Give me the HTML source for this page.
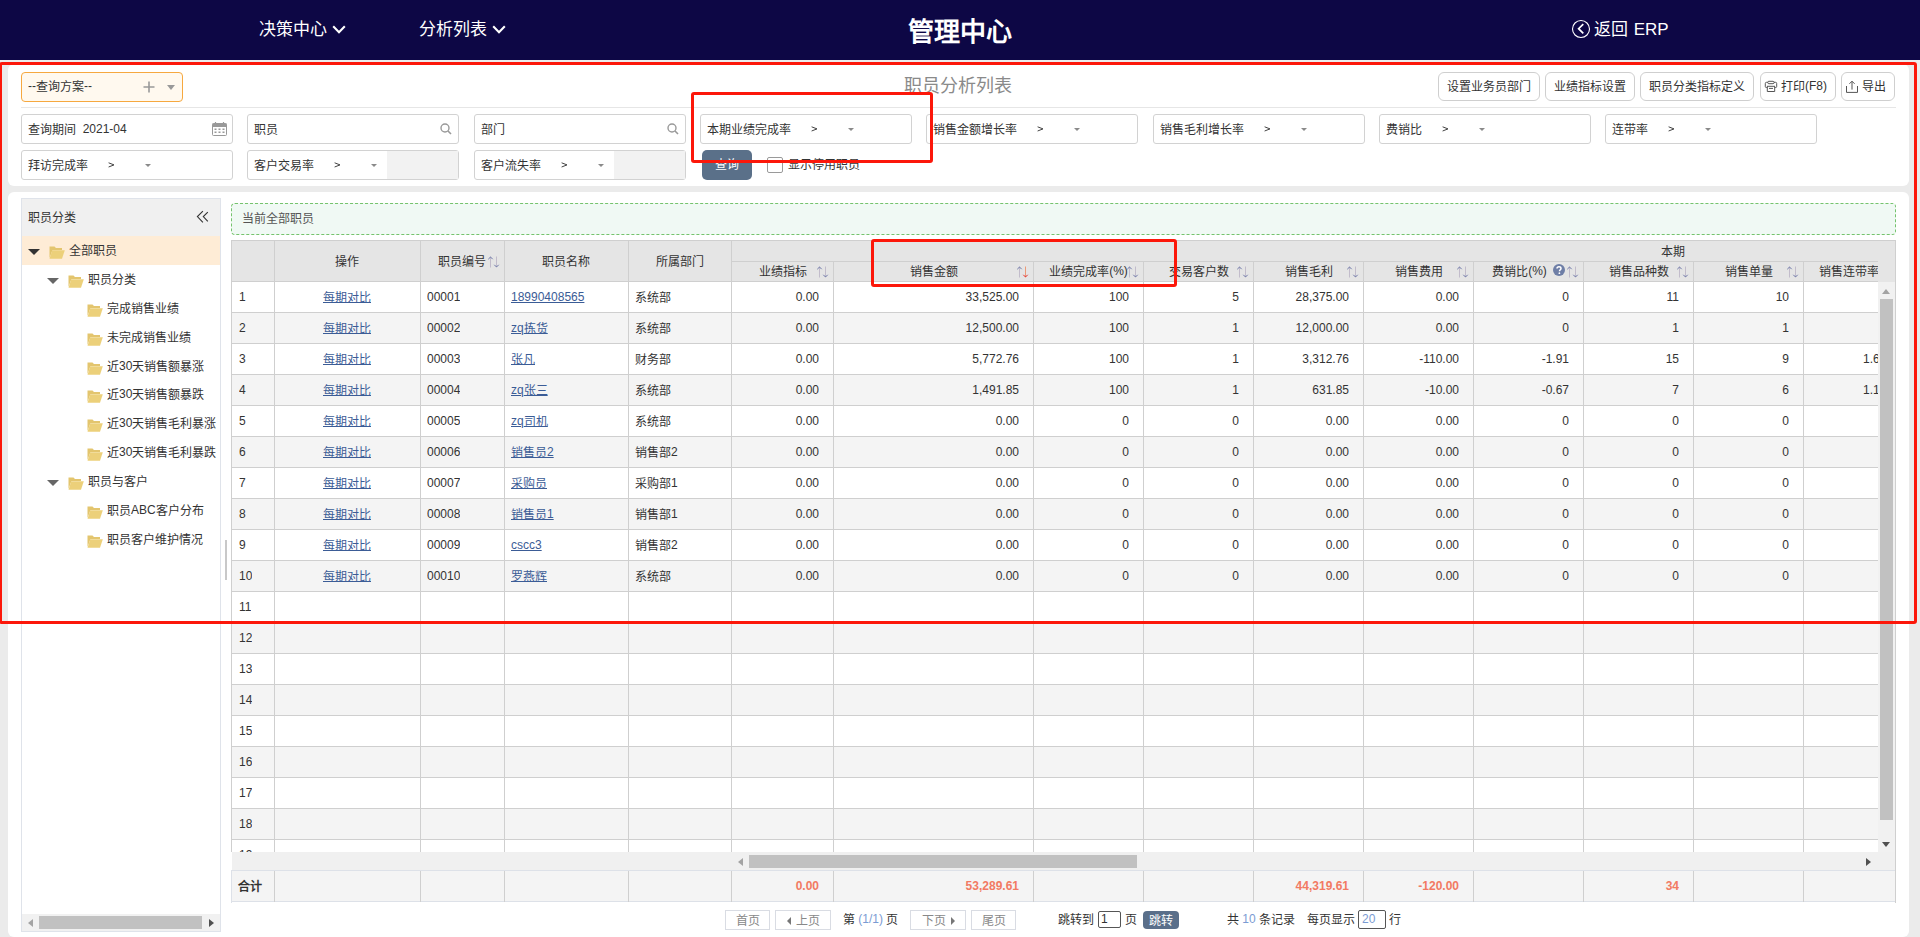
<!DOCTYPE html><html lang="zh-CN"><head><meta charset="utf-8"><title>职员分析列表</title><style>

*{box-sizing:border-box;margin:0;padding:0}
html,body{width:1920px;height:937px;overflow:hidden}
body{position:relative;background:#ebebeb;font-family:"Liberation Sans",sans-serif;font-size:12px;color:#333}
.abs{position:absolute}
.hdr{position:absolute;left:0;top:0;width:1920px;height:60px;background:#0d0745;color:#fff}
.nav{position:absolute;top:17px;font-size:17px;line-height:24px;white-space:nowrap}
.panel{position:absolute;background:#fff;border-radius:6px}
.inp{position:absolute;height:30px;border:1px solid #d2d2d2;border-radius:3px;background:#fff;width:212px}
.inp .t{position:absolute;left:6px;top:7px;line-height:14px;white-space:nowrap}
.gt{position:absolute;font-size:11px;color:#555}
.tri{position:absolute;width:0;height:0;border-left:4px solid transparent;border-right:4px solid transparent;border-top:4px solid #888}
.btn{position:absolute;top:72px;height:29px;border:1px solid #cfcfcf;border-radius:6px;background:#fff;line-height:27px;text-align:center;white-space:nowrap;color:#333}
.c{position:absolute;white-space:nowrap;overflow:hidden}
.hd{background:#e5e5e5}
.lnk{color:#3b5c96;text-decoration:underline}
.red{position:absolute;border:3px solid #fc170a;border-radius:3px}
.sort{position:absolute;width:12px;height:12px}
.z{position:relative;top:1px}

</style></head><body>
<div class="hdr">
<div class="nav" style="left:259px"><span class="z">决策中心</span></div>
<svg width="14" height="9" viewBox="0 0 14 9" style="position:absolute;left:332px;top:25px"><path d="M1.2 1.3 L7 7.2 L12.8 1.3" stroke="#fff" stroke-width="2.1" fill="none"/></svg>
<div class="nav" style="left:419px"><span class="z">分析列表</span></div>
<svg width="14" height="9" viewBox="0 0 14 9" style="position:absolute;left:492px;top:25px"><path d="M1.2 1.3 L7 7.2 L12.8 1.3" stroke="#fff" stroke-width="2.1" fill="none"/></svg>
<div class="abs" style="left:0;width:1920px;top:15px;text-align:center;font-size:26px;line-height:32px;font-weight:bold"><span class="z">管理中心</span></div>
<svg class="abs" style="left:1571px;top:19px" width="20" height="20" viewBox="0 0 20 20"><circle cx="10" cy="10" r="8.5" stroke="#fff" stroke-width="1.1" fill="none"/><path d="M12.3 5.2L7.6 9.7L12.3 14.3" stroke="#fff" stroke-width="1.7" fill="none"/></svg>
<div class="nav" style="left:1594px;font-size:17px"><span class="z">返回</span> <span style="position:relative;top:1px;left:1px">ERP</span></div>
</div>
<div class="panel" style="left:8px;top:64px;width:1901px;height:122px"></div>
<div class="abs" style="left:21px;top:72px;width:162px;height:30px;border:1px solid #f6a83f;border-radius:4px;background:#fff9ef"></div>
<div class="abs" style="left:28px;top:79px;line-height:14px">--<span class="z">查询方案</span>--</div>
<svg class="abs" style="left:143px;top:81px" width="12" height="12" viewBox="0 0 12 12"><path d="M6 0.5V11.5M0.5 6H11.5" stroke="#999" stroke-width="1.6"/></svg>
<div class="tri" style="left:167px;top:85px;border-left-width:4.5px;border-right-width:4.5px;border-top-width:5px;border-top-color:#999"></div>
<div class="abs" style="left:0;width:1920px;top:74px;left:-2px;text-align:center;font-size:18px;line-height:22px;color:#8a8a8a"><span class="z">职员分析列表</span></div>
<div class="btn" style="left:1438px;width:102px"><span class="z">设置业务员部门</span></div>
<div class="btn" style="left:1545px;width:90px"><span class="z">业绩指标设置</span></div>
<div class="btn" style="left:1640px;width:114px"><span class="z">职员分类指标定义</span></div>
<div class="btn" style="left:1760px;width:76px"></div>
<div class="btn" style="left:1841px;width:54px"></div>
<div class="abs" style="left:1781px;top:79px;line-height:14px;white-space:nowrap"><span class="z">打印</span>(F8)</div>
<div class="abs" style="left:1862px;top:79px;line-height:14px;white-space:nowrap"><span class="z">导出</span></div>
<svg class="abs" style="left:1764px;top:80px" width="14" height="13" viewBox="0 0 14 13"><rect x="3.8" y="1.3" width="6.2" height="2.4" rx="1" stroke="#555" stroke-width="1" fill="none"/><path d="M3.3 7.5H2.3Q1.3 7.5 1.3 6.5V3.5Q1.3 2.3 2.5 2.3H3.8M10 2.3H11.5Q12.7 2.3 12.7 3.5V6.5Q12.7 7.5 11.7 7.5H10.7" stroke="#555" stroke-width="1" fill="none"/><path d="M3 6.3H11" stroke="#555" stroke-width="1"/><path d="M3.3 6.3V11.5H10.7V6.3" stroke="#555" stroke-width="1" fill="none"/><path d="M5 8.4H9" stroke="#555" stroke-width="1"/></svg>
<svg class="abs" style="left:1845px;top:80px" width="14" height="14" viewBox="0 0 14 14"><path d="M1.5 6V12.4H12.5V6" stroke="#555" stroke-width="1" fill="none"/><path d="M7 9.6V1.4M4.4 3.8L7 1.2L9.6 3.8" stroke="#555" stroke-width="1" fill="none"/></svg>
<div class="abs" style="left:21px;top:107px;width:1875px;height:1px;background:#e6e6e6"></div>
<div class="inp" style="left:21px;top:114px"><div class="t"><span class="z">查询期间</span>&nbsp; 2021-04</div><svg class="abs" style="right:5px;top:7px" width="15" height="14" viewBox="0 0 15 14"><rect x="0.5" y="1.5" width="14" height="12" rx="1" stroke="#999" fill="#fff"/><rect x="0.5" y="1.5" width="14" height="3.5" fill="#999"/><path d="M3.5 0V3M11.5 0V3" stroke="#999" stroke-width="1.2"/><g fill="#999"><rect x="2.5" y="6.5" width="2" height="1.5"/><rect x="6.5" y="6.5" width="2" height="1.5"/><rect x="10.5" y="6.5" width="2" height="1.5"/><rect x="2.5" y="9.5" width="2" height="1.5"/><rect x="6.5" y="9.5" width="2" height="1.5"/><rect x="10.5" y="9.5" width="2" height="1.5"/></g></svg></div>
<div class="inp" style="left:247px;top:114px"><div class="t"><span class="z">职员</span></div><svg class="abs" style="right:6px;top:8px" width="12" height="12" viewBox="0 0 12 12"><circle cx="5" cy="5" r="4" stroke="#999" stroke-width="1.4" fill="none"/><path d="M8 8L11 11" stroke="#999" stroke-width="1.6"/></svg></div>
<div class="inp" style="left:474px;top:114px"><div class="t"><span class="z">部门</span></div><svg class="abs" style="right:6px;top:8px" width="12" height="12" viewBox="0 0 12 12"><circle cx="5" cy="5" r="4" stroke="#999" stroke-width="1.4" fill="none"/><path d="M8 8L11 11" stroke="#999" stroke-width="1.6"/></svg></div>
<div class="inp" style="left:700px;top:114px"><div class="t"><span class="z">本期业绩完成率</span></div><svg class="abs" style="left:110px;top:11px" width="7" height="6" viewBox="0 0 7 6"><path d="M0.6 0.8L6 2.9L0.6 5" stroke="#444" stroke-width="1" fill="none"/></svg><div class="tri" style="left:147px;top:13px;border-left-width:3px;border-right-width:3px;border-top-width:3.5px;border-top-color:#8a8a8a"></div></div>
<div class="inp" style="left:926px;top:114px"><div class="t"><span class="z">销售金额增长率</span></div><svg class="abs" style="left:110px;top:11px" width="7" height="6" viewBox="0 0 7 6"><path d="M0.6 0.8L6 2.9L0.6 5" stroke="#444" stroke-width="1" fill="none"/></svg><div class="tri" style="left:147px;top:13px;border-left-width:3px;border-right-width:3px;border-top-width:3.5px;border-top-color:#8a8a8a"></div></div>
<div class="inp" style="left:1153px;top:114px"><div class="t"><span class="z">销售毛利增长率</span></div><svg class="abs" style="left:110px;top:11px" width="7" height="6" viewBox="0 0 7 6"><path d="M0.6 0.8L6 2.9L0.6 5" stroke="#444" stroke-width="1" fill="none"/></svg><div class="tri" style="left:147px;top:13px;border-left-width:3px;border-right-width:3px;border-top-width:3.5px;border-top-color:#8a8a8a"></div></div>
<div class="inp" style="left:1379px;top:114px"><div class="t"><span class="z">费销比</span></div><svg class="abs" style="left:62px;top:11px" width="7" height="6" viewBox="0 0 7 6"><path d="M0.6 0.8L6 2.9L0.6 5" stroke="#444" stroke-width="1" fill="none"/></svg><div class="tri" style="left:99px;top:13px;border-left-width:3px;border-right-width:3px;border-top-width:3.5px;border-top-color:#8a8a8a"></div></div>
<div class="inp" style="left:1605px;top:114px"><div class="t"><span class="z">连带率</span></div><svg class="abs" style="left:62px;top:11px" width="7" height="6" viewBox="0 0 7 6"><path d="M0.6 0.8L6 2.9L0.6 5" stroke="#444" stroke-width="1" fill="none"/></svg><div class="tri" style="left:99px;top:13px;border-left-width:3px;border-right-width:3px;border-top-width:3.5px;border-top-color:#8a8a8a"></div></div>
<div class="inp" style="left:21px;top:150px"><div class="t"><span class="z">拜访完成率</span></div><svg class="abs" style="left:86px;top:11px" width="7" height="6" viewBox="0 0 7 6"><path d="M0.6 0.8L6 2.9L0.6 5" stroke="#444" stroke-width="1" fill="none"/></svg><div class="tri" style="left:123px;top:13px;border-left-width:3px;border-right-width:3px;border-top-width:3.5px;border-top-color:#8a8a8a"></div></div>
<div class="inp" style="left:247px;top:150px"><div class="abs" style="left:139px;top:0;width:71px;height:28px;background:#f2f2f2"></div><div class="t"><span class="z">客户交易率</span></div><svg class="abs" style="left:86px;top:11px" width="7" height="6" viewBox="0 0 7 6"><path d="M0.6 0.8L6 2.9L0.6 5" stroke="#444" stroke-width="1" fill="none"/></svg><div class="tri" style="left:123px;top:13px;border-left-width:3px;border-right-width:3px;border-top-width:3.5px;border-top-color:#8a8a8a"></div></div>
<div class="inp" style="left:474px;top:150px"><div class="abs" style="left:139px;top:0;width:71px;height:28px;background:#f2f2f2"></div><div class="t"><span class="z">客户流失率</span></div><svg class="abs" style="left:86px;top:11px" width="7" height="6" viewBox="0 0 7 6"><path d="M0.6 0.8L6 2.9L0.6 5" stroke="#444" stroke-width="1" fill="none"/></svg><div class="tri" style="left:123px;top:13px;border-left-width:3px;border-right-width:3px;border-top-width:3.5px;border-top-color:#8a8a8a"></div></div>
<div class="abs" style="left:702px;top:150px;width:50px;height:30px;border-radius:5px;background:#5a7089;color:#fff;text-align:center;line-height:28px"><span class="z">查询</span></div>
<div class="abs" style="left:767px;top:157px;width:16px;height:16px;border:1px solid #9a9a9a;border-radius:2px;background:#fff"></div>
<div class="abs" style="left:788px;top:157px;line-height:14px"><span class="z">显示停用职员</span></div>
<div class="panel" style="left:8px;top:192px;width:1901px;height:745px"></div>
<div class="abs" style="left:21px;top:198px;width:200px;height:734px;border:1px solid #dfe3ea;background:#fff"></div>
<div class="abs" style="left:22px;top:199px;width:198px;height:37px;background:#f0f0f0"></div>
<div class="abs" style="left:28px;top:210px;line-height:14px"><span class="z">职员分类</span></div>
<svg class="abs" style="left:195px;top:209px" width="16" height="16" viewBox="0 0 16 16"><path d="M7.9 2.2L2.4 7.6L7.9 13.4M12.8 3.1L8.3 7.6L12.8 12.4" stroke="#333" stroke-width="1.1" fill="none"/></svg>
<div class="abs" style="left:22px;top:236px;width:198px;height:29px;background:#feecd6"></div>
<div class="tri" style="left:28px;top:249px;border-left-width:6px;border-right-width:6px;border-top-width:6px;border-top-color:#333"></div>
<svg class="abs" style="left:49px;top:245px" width="16" height="14" viewBox="0 0 16 14"><path d="M0.5 1.5H5.5L7 3H13V5H3.5L0.5 13Z" fill="#e3c56e"/><path d="M3.2 5.2H15.8L13 13.8H0.5Z" fill="#ecd07a"/></svg>
<div class="abs" style="left:69px;top:243px;line-height:14px;white-space:nowrap"><span class="z">全部职员</span></div>
<div class="tri" style="left:47px;top:278px;border-left-width:6px;border-right-width:6px;border-top-width:6px;border-top-color:#666"></div>
<svg class="abs" style="left:68px;top:274px" width="16" height="14" viewBox="0 0 16 14"><path d="M0.5 1.5H5.5L7 3H13V5H3.5L0.5 13Z" fill="#e3c56e"/><path d="M3.2 5.2H15.8L13 13.8H0.5Z" fill="#ecd07a"/></svg>
<div class="abs" style="left:88px;top:272px;line-height:14px;white-space:nowrap"><span class="z">职员分类</span></div>
<svg class="abs" style="left:87px;top:303px" width="16" height="14" viewBox="0 0 16 14"><path d="M0.5 1.5H5.5L7 3H13V5H3.5L0.5 13Z" fill="#e3c56e"/><path d="M3.2 5.2H15.8L13 13.8H0.5Z" fill="#ecd07a"/></svg>
<div class="abs" style="left:107px;top:301px;line-height:14px;white-space:nowrap"><span class="z">完成销售业绩</span></div>
<svg class="abs" style="left:87px;top:332px" width="16" height="14" viewBox="0 0 16 14"><path d="M0.5 1.5H5.5L7 3H13V5H3.5L0.5 13Z" fill="#e3c56e"/><path d="M3.2 5.2H15.8L13 13.8H0.5Z" fill="#ecd07a"/></svg>
<div class="abs" style="left:107px;top:330px;line-height:14px;white-space:nowrap"><span class="z">未完成销售业绩</span></div>
<svg class="abs" style="left:87px;top:361px" width="16" height="14" viewBox="0 0 16 14"><path d="M0.5 1.5H5.5L7 3H13V5H3.5L0.5 13Z" fill="#e3c56e"/><path d="M3.2 5.2H15.8L13 13.8H0.5Z" fill="#ecd07a"/></svg>
<div class="abs" style="left:107px;top:359px;line-height:14px;white-space:nowrap"><span class="z">近</span>30<span class="z">天销售额暴涨</span></div>
<svg class="abs" style="left:87px;top:389px" width="16" height="14" viewBox="0 0 16 14"><path d="M0.5 1.5H5.5L7 3H13V5H3.5L0.5 13Z" fill="#e3c56e"/><path d="M3.2 5.2H15.8L13 13.8H0.5Z" fill="#ecd07a"/></svg>
<div class="abs" style="left:107px;top:387px;line-height:14px;white-space:nowrap"><span class="z">近</span>30<span class="z">天销售额暴跌</span></div>
<svg class="abs" style="left:87px;top:418px" width="16" height="14" viewBox="0 0 16 14"><path d="M0.5 1.5H5.5L7 3H13V5H3.5L0.5 13Z" fill="#e3c56e"/><path d="M3.2 5.2H15.8L13 13.8H0.5Z" fill="#ecd07a"/></svg>
<div class="abs" style="left:107px;top:416px;line-height:14px;white-space:nowrap"><span class="z">近</span>30<span class="z">天销售毛利暴涨</span></div>
<svg class="abs" style="left:87px;top:447px" width="16" height="14" viewBox="0 0 16 14"><path d="M0.5 1.5H5.5L7 3H13V5H3.5L0.5 13Z" fill="#e3c56e"/><path d="M3.2 5.2H15.8L13 13.8H0.5Z" fill="#ecd07a"/></svg>
<div class="abs" style="left:107px;top:445px;line-height:14px;white-space:nowrap"><span class="z">近</span>30<span class="z">天销售毛利暴跌</span></div>
<div class="tri" style="left:47px;top:480px;border-left-width:6px;border-right-width:6px;border-top-width:6px;border-top-color:#666"></div>
<svg class="abs" style="left:68px;top:476px" width="16" height="14" viewBox="0 0 16 14"><path d="M0.5 1.5H5.5L7 3H13V5H3.5L0.5 13Z" fill="#e3c56e"/><path d="M3.2 5.2H15.8L13 13.8H0.5Z" fill="#ecd07a"/></svg>
<div class="abs" style="left:88px;top:474px;line-height:14px;white-space:nowrap"><span class="z">职员与客户</span></div>
<svg class="abs" style="left:87px;top:505px" width="16" height="14" viewBox="0 0 16 14"><path d="M0.5 1.5H5.5L7 3H13V5H3.5L0.5 13Z" fill="#e3c56e"/><path d="M3.2 5.2H15.8L13 13.8H0.5Z" fill="#ecd07a"/></svg>
<div class="abs" style="left:107px;top:503px;line-height:14px;white-space:nowrap"><span class="z">职员</span>ABC<span class="z">客户分布</span></div>
<svg class="abs" style="left:87px;top:534px" width="16" height="14" viewBox="0 0 16 14"><path d="M0.5 1.5H5.5L7 3H13V5H3.5L0.5 13Z" fill="#e3c56e"/><path d="M3.2 5.2H15.8L13 13.8H0.5Z" fill="#ecd07a"/></svg>
<div class="abs" style="left:107px;top:532px;line-height:14px;white-space:nowrap"><span class="z">职员客户维护情况</span></div>
<div class="abs" style="left:22px;top:914px;width:198px;height:17px;background:#f1f1f1"></div>
<div class="abs" style="left:39px;top:916px;width:163px;height:13px;background:#c1c1c1"></div>
<div class="abs" style="left:28px;top:919px;width:0;height:0;border-top:4px solid transparent;border-bottom:4px solid transparent;border-right:5px solid #a3a3a3"></div>
<div class="abs" style="left:209px;top:919px;width:0;height:0;border-top:4px solid transparent;border-bottom:4px solid transparent;border-left:5px solid #505050"></div>
<div class="abs" style="left:225px;top:540px;width:2px;height:40px;background:#c8c8c8"></div>
<div class="abs" style="left:231px;top:203px;width:1665px;height:32px;border:1px dashed #75c36d;border-radius:4px;background:#f0f9f4"></div>
<div class="abs" style="left:242px;top:211px;line-height:14px;color:#555"><span class="z">当前全部职员</span></div>
<div class="abs" style="left:231px;top:240px;width:1665px;height:42px;background:#e5e5e5"></div>
<div class="abs" style="left:232px;top:282px;width:1646px;height:31px;background:#fff"></div>
<div class="abs" style="left:232px;top:313px;width:1646px;height:31px;background:#f4f4f4"></div>
<div class="abs" style="left:232px;top:344px;width:1646px;height:31px;background:#fff"></div>
<div class="abs" style="left:232px;top:375px;width:1646px;height:31px;background:#f4f4f4"></div>
<div class="abs" style="left:232px;top:406px;width:1646px;height:31px;background:#fff"></div>
<div class="abs" style="left:232px;top:437px;width:1646px;height:31px;background:#f4f4f4"></div>
<div class="abs" style="left:232px;top:468px;width:1646px;height:31px;background:#fff"></div>
<div class="abs" style="left:232px;top:499px;width:1646px;height:31px;background:#f4f4f4"></div>
<div class="abs" style="left:232px;top:530px;width:1646px;height:31px;background:#fff"></div>
<div class="abs" style="left:232px;top:561px;width:1646px;height:31px;background:#f4f4f4"></div>
<div class="abs" style="left:232px;top:592px;width:1646px;height:31px;background:#fff"></div>
<div class="abs" style="left:232px;top:623px;width:1646px;height:31px;background:#f4f4f4"></div>
<div class="abs" style="left:232px;top:654px;width:1646px;height:31px;background:#fff"></div>
<div class="abs" style="left:232px;top:685px;width:1646px;height:31px;background:#f4f4f4"></div>
<div class="abs" style="left:232px;top:716px;width:1646px;height:31px;background:#fff"></div>
<div class="abs" style="left:232px;top:747px;width:1646px;height:31px;background:#f4f4f4"></div>
<div class="abs" style="left:232px;top:778px;width:1646px;height:31px;background:#fff"></div>
<div class="abs" style="left:232px;top:809px;width:1646px;height:31px;background:#f4f4f4"></div>
<div class="abs" style="left:232px;top:840px;width:1646px;height:12px;background:#fff"></div>
<div class="abs" style="left:231px;top:240px;width:1665px;height:1px;background:#cfcfcf"></div>
<div class="abs" style="left:731px;top:261px;width:1147px;height:1px;background:#cfcfcf"></div>
<div class="abs" style="left:231px;top:281px;width:1647px;height:1px;background:#cfcfcf"></div>
<div class="abs" style="left:231px;top:312px;width:1647px;height:1px;background:#cfcfcf"></div>
<div class="abs" style="left:231px;top:343px;width:1647px;height:1px;background:#cfcfcf"></div>
<div class="abs" style="left:231px;top:374px;width:1647px;height:1px;background:#cfcfcf"></div>
<div class="abs" style="left:231px;top:405px;width:1647px;height:1px;background:#cfcfcf"></div>
<div class="abs" style="left:231px;top:436px;width:1647px;height:1px;background:#cfcfcf"></div>
<div class="abs" style="left:231px;top:467px;width:1647px;height:1px;background:#cfcfcf"></div>
<div class="abs" style="left:231px;top:498px;width:1647px;height:1px;background:#cfcfcf"></div>
<div class="abs" style="left:231px;top:529px;width:1647px;height:1px;background:#cfcfcf"></div>
<div class="abs" style="left:231px;top:560px;width:1647px;height:1px;background:#cfcfcf"></div>
<div class="abs" style="left:231px;top:591px;width:1647px;height:1px;background:#cfcfcf"></div>
<div class="abs" style="left:231px;top:622px;width:1647px;height:1px;background:#cfcfcf"></div>
<div class="abs" style="left:231px;top:653px;width:1647px;height:1px;background:#cfcfcf"></div>
<div class="abs" style="left:231px;top:684px;width:1647px;height:1px;background:#cfcfcf"></div>
<div class="abs" style="left:231px;top:715px;width:1647px;height:1px;background:#cfcfcf"></div>
<div class="abs" style="left:231px;top:746px;width:1647px;height:1px;background:#cfcfcf"></div>
<div class="abs" style="left:231px;top:777px;width:1647px;height:1px;background:#cfcfcf"></div>
<div class="abs" style="left:231px;top:808px;width:1647px;height:1px;background:#cfcfcf"></div>
<div class="abs" style="left:231px;top:839px;width:1647px;height:1px;background:#cfcfcf"></div>
<div class="abs" style="left:231px;top:240px;width:1px;height:612px;background:#cfcfcf"></div>
<div class="abs" style="left:274px;top:240px;width:1px;height:612px;background:#cfcfcf"></div>
<div class="abs" style="left:420px;top:240px;width:1px;height:612px;background:#cfcfcf"></div>
<div class="abs" style="left:504px;top:240px;width:1px;height:612px;background:#cfcfcf"></div>
<div class="abs" style="left:628px;top:240px;width:1px;height:612px;background:#cfcfcf"></div>
<div class="abs" style="left:731px;top:240px;width:1px;height:612px;background:#cfcfcf"></div>
<div class="abs" style="left:833px;top:261px;width:1px;height:591px;background:#cfcfcf"></div>
<div class="abs" style="left:1033px;top:261px;width:1px;height:591px;background:#cfcfcf"></div>
<div class="abs" style="left:1143px;top:261px;width:1px;height:591px;background:#cfcfcf"></div>
<div class="abs" style="left:1253px;top:261px;width:1px;height:591px;background:#cfcfcf"></div>
<div class="abs" style="left:1363px;top:261px;width:1px;height:591px;background:#cfcfcf"></div>
<div class="abs" style="left:1473px;top:261px;width:1px;height:591px;background:#cfcfcf"></div>
<div class="abs" style="left:1583px;top:261px;width:1px;height:591px;background:#cfcfcf"></div>
<div class="abs" style="left:1693px;top:261px;width:1px;height:591px;background:#cfcfcf"></div>
<div class="abs" style="left:1803px;top:261px;width:1px;height:591px;background:#cfcfcf"></div>
<div class="abs" style="left:1895px;top:240px;width:1px;height:663px;background:#cfcfcf"></div>
<div class="abs" style="left:1878px;top:282px;width:17px;height:570px;background:#f1f1f1"></div>
<div class="abs" style="left:1880px;top:299px;width:13px;height:521px;background:#c1c1c1"></div>
<div class="abs" style="left:1882px;top:289px;width:0;height:0;border-left:4px solid transparent;border-right:4px solid transparent;border-bottom:5px solid #a3a3a3"></div>
<div class="abs" style="left:1882px;top:842px;width:0;height:0;border-left:4px solid transparent;border-right:4px solid transparent;border-top:5px solid #505050"></div>
<div class="abs" style="left:232px;top:852px;width:1663px;height:18px;background:#f0f0f0"></div>
<div class="abs" style="left:749px;top:855px;width:388px;height:13px;background:#c1c1c1"></div>
<div class="abs" style="left:738px;top:858px;width:0;height:0;border-top:4px solid transparent;border-bottom:4px solid transparent;border-right:5px solid #a3a3a3"></div>
<div class="abs" style="left:1866px;top:858px;width:0;height:0;border-top:4px solid transparent;border-bottom:4px solid transparent;border-left:5px solid #505050"></div>
<div class="abs" style="left:232px;top:870px;width:1663px;height:32px;background:#f4f4f4;border-top:1px solid #dde1e8;border-bottom:1px solid #dde1e8"></div>
<div class="abs" style="left:274px;top:871px;width:1px;height:31px;background:#cfcfcf"></div>
<div class="abs" style="left:420px;top:871px;width:1px;height:31px;background:#cfcfcf"></div>
<div class="abs" style="left:504px;top:871px;width:1px;height:31px;background:#cfcfcf"></div>
<div class="abs" style="left:628px;top:871px;width:1px;height:31px;background:#cfcfcf"></div>
<div class="abs" style="left:731px;top:871px;width:1px;height:31px;background:#cfcfcf"></div>
<div class="abs" style="left:833px;top:871px;width:1px;height:31px;background:#cfcfcf"></div>
<div class="abs" style="left:1033px;top:871px;width:1px;height:31px;background:#cfcfcf"></div>
<div class="abs" style="left:1143px;top:871px;width:1px;height:31px;background:#cfcfcf"></div>
<div class="abs" style="left:1253px;top:871px;width:1px;height:31px;background:#cfcfcf"></div>
<div class="abs" style="left:1363px;top:871px;width:1px;height:31px;background:#cfcfcf"></div>
<div class="abs" style="left:1473px;top:871px;width:1px;height:31px;background:#cfcfcf"></div>
<div class="abs" style="left:1583px;top:871px;width:1px;height:31px;background:#cfcfcf"></div>
<div class="abs" style="left:1693px;top:871px;width:1px;height:31px;background:#cfcfcf"></div>
<div class="abs" style="left:1803px;top:871px;width:1px;height:31px;background:#cfcfcf"></div>
<div class="abs" style="left:231px;top:870px;width:1px;height:33px;background:#dde1e8"></div>
<div class="abs" style="left:238px;top:879px;line-height:14px;font-weight:bold"><span class="z">合计</span></div>
<div class="c" style="left:274px;top:241px;width:146px;height:40px;line-height:40px;text-align:center"><span class="z">操作</span></div>
<div class="c" style="left:420px;top:241px;width:84px;height:40px;line-height:40px;text-align:center"><span class="z">职员编号</span></div>
<svg class="sort" style="left:488px;top:256px" width="12" height="12" viewBox="0 0 12 12"><rect x="2" y="0.5" width="1" height="11" fill="#c2bccb"/><path d="M0.3 3.2L2.5 1L4.7 3.2" stroke="#6d78a8" stroke-width="1" fill="none"/><rect x="8" y="0.5" width="1" height="11" fill="#c2bccb"/><path d="M6.3 8.8L8.5 11L10.7 8.8" stroke="#6d78a8" stroke-width="1" fill="none"/></svg>
<div class="c" style="left:504px;top:241px;width:124px;height:40px;line-height:40px;text-align:center"><span class="z">职员名称</span></div>
<div class="c" style="left:628px;top:241px;width:103px;height:40px;line-height:40px;text-align:center"><span class="z">所属部门</span></div>
<div class="c" style="left:1600px;top:241px;width:146px;height:20px;line-height:20px;text-align:center"><span class="z">本期</span></div>
<div class="c" style="left:732px;top:262px;width:101px;height:19px;line-height:19px"><div style="position:absolute;left:0;width:101px;text-align:center"><span class="z">业绩指标</span></div></div>
<svg class="sort" style="left:817px;top:266px" width="12" height="12" viewBox="0 0 12 12"><rect x="2" y="0.5" width="1" height="11" fill="#c2bccb"/><path d="M0.3 3.2L2.5 1L4.7 3.2" stroke="#6d78a8" stroke-width="1" fill="none"/><rect x="8" y="0.5" width="1" height="11" fill="#c2bccb"/><path d="M6.3 8.8L8.5 11L10.7 8.8" stroke="#6d78a8" stroke-width="1" fill="none"/></svg>
<div class="c" style="left:834px;top:262px;width:199px;height:19px;line-height:19px"><div style="position:absolute;left:0;width:199px;text-align:center"><span class="z">销售金额</span></div></div>
<svg class="sort" style="left:1017px;top:266px" width="12" height="12" viewBox="0 0 12 12"><rect x="2" y="0.5" width="1" height="11" fill="#c2bccb"/><path d="M0.3 3.2L2.5 1L4.7 3.2" stroke="#6d78a8" stroke-width="1" fill="none"/><rect x="8" y="0.5" width="1" height="11" fill="#eb9a78"/><path d="M6.3 8.8L8.5 11L10.7 8.8" stroke="#e3302e" stroke-width="1" fill="none"/></svg>
<div class="c" style="left:1034px;top:262px;width:109px;height:19px;line-height:19px"><div style="position:absolute;left:0;width:109px;text-align:center"><span class="z">业绩完成率</span>(%)</div></div>
<svg class="sort" style="left:1127px;top:266px" width="12" height="12" viewBox="0 0 12 12"><rect x="2" y="0.5" width="1" height="11" fill="#c2bccb"/><path d="M0.3 3.2L2.5 1L4.7 3.2" stroke="#6d78a8" stroke-width="1" fill="none"/><rect x="8" y="0.5" width="1" height="11" fill="#c2bccb"/><path d="M6.3 8.8L8.5 11L10.7 8.8" stroke="#6d78a8" stroke-width="1" fill="none"/></svg>
<div class="c" style="left:1144px;top:262px;width:109px;height:19px;line-height:19px"><div style="position:absolute;left:0;width:109px;text-align:center"><span class="z">交易客户数</span></div></div>
<svg class="sort" style="left:1237px;top:266px" width="12" height="12" viewBox="0 0 12 12"><rect x="2" y="0.5" width="1" height="11" fill="#c2bccb"/><path d="M0.3 3.2L2.5 1L4.7 3.2" stroke="#6d78a8" stroke-width="1" fill="none"/><rect x="8" y="0.5" width="1" height="11" fill="#c2bccb"/><path d="M6.3 8.8L8.5 11L10.7 8.8" stroke="#6d78a8" stroke-width="1" fill="none"/></svg>
<div class="c" style="left:1254px;top:262px;width:109px;height:19px;line-height:19px"><div style="position:absolute;left:0;width:109px;text-align:center"><span class="z">销售毛利</span></div></div>
<svg class="sort" style="left:1347px;top:266px" width="12" height="12" viewBox="0 0 12 12"><rect x="2" y="0.5" width="1" height="11" fill="#c2bccb"/><path d="M0.3 3.2L2.5 1L4.7 3.2" stroke="#6d78a8" stroke-width="1" fill="none"/><rect x="8" y="0.5" width="1" height="11" fill="#c2bccb"/><path d="M6.3 8.8L8.5 11L10.7 8.8" stroke="#6d78a8" stroke-width="1" fill="none"/></svg>
<div class="c" style="left:1364px;top:262px;width:109px;height:19px;line-height:19px"><div style="position:absolute;left:0;width:109px;text-align:center"><span class="z">销售费用</span></div></div>
<svg class="sort" style="left:1457px;top:266px" width="12" height="12" viewBox="0 0 12 12"><rect x="2" y="0.5" width="1" height="11" fill="#c2bccb"/><path d="M0.3 3.2L2.5 1L4.7 3.2" stroke="#6d78a8" stroke-width="1" fill="none"/><rect x="8" y="0.5" width="1" height="11" fill="#c2bccb"/><path d="M6.3 8.8L8.5 11L10.7 8.8" stroke="#6d78a8" stroke-width="1" fill="none"/></svg>
<div class="c" style="left:1474px;top:262px;width:109px;height:19px;line-height:19px"><div style="position:absolute;left:0;width:109px;text-align:center"><span class="z">费销比</span>(%)<svg width="12" height="12" viewBox="0 0 12 12" style="margin-left:6px;vertical-align:-1px"><circle cx="6" cy="6" r="6" fill="#6e7ea6"/><path d="M4 4.6C4 3.4 4.9 2.7 6 2.7C7.1 2.7 8 3.4 8 4.4C8 5.6 6.5 5.8 6.5 7.2" stroke="#fff" stroke-width="1.5" fill="none"/><circle cx="6.4" cy="9.2" r="0.9" fill="#fff"/></svg></div></div>
<svg class="sort" style="left:1567px;top:266px" width="12" height="12" viewBox="0 0 12 12"><rect x="2" y="0.5" width="1" height="11" fill="#c2bccb"/><path d="M0.3 3.2L2.5 1L4.7 3.2" stroke="#6d78a8" stroke-width="1" fill="none"/><rect x="8" y="0.5" width="1" height="11" fill="#c2bccb"/><path d="M6.3 8.8L8.5 11L10.7 8.8" stroke="#6d78a8" stroke-width="1" fill="none"/></svg>
<div class="c" style="left:1584px;top:262px;width:109px;height:19px;line-height:19px"><div style="position:absolute;left:0;width:109px;text-align:center"><span class="z">销售品种数</span></div></div>
<svg class="sort" style="left:1677px;top:266px" width="12" height="12" viewBox="0 0 12 12"><rect x="2" y="0.5" width="1" height="11" fill="#c2bccb"/><path d="M0.3 3.2L2.5 1L4.7 3.2" stroke="#6d78a8" stroke-width="1" fill="none"/><rect x="8" y="0.5" width="1" height="11" fill="#c2bccb"/><path d="M6.3 8.8L8.5 11L10.7 8.8" stroke="#6d78a8" stroke-width="1" fill="none"/></svg>
<div class="c" style="left:1694px;top:262px;width:109px;height:19px;line-height:19px"><div style="position:absolute;left:0;width:109px;text-align:center"><span class="z">销售单量</span></div></div>
<svg class="sort" style="left:1787px;top:266px" width="12" height="12" viewBox="0 0 12 12"><rect x="2" y="0.5" width="1" height="11" fill="#c2bccb"/><path d="M0.3 3.2L2.5 1L4.7 3.2" stroke="#6d78a8" stroke-width="1" fill="none"/><rect x="8" y="0.5" width="1" height="11" fill="#c2bccb"/><path d="M6.3 8.8L8.5 11L10.7 8.8" stroke="#6d78a8" stroke-width="1" fill="none"/></svg>
<div class="c" style="left:1804px;top:262px;width:74px;height:19px;line-height:19px"><div style="position:absolute;left:15px"><span class="z">销售连带率</span></div></div>
<div class="c" style="left:239px;top:282px;height:30px;line-height:30px">1</div>
<div class="c lnk" style="left:274px;top:282px;width:146px;height:30px;line-height:30px;text-align:center;overflow:visible"><span class="z">每期对比</span></div>
<div class="c" style="left:427px;top:282px;height:30px;line-height:30px">00001</div>
<div class="c lnk" style="left:511px;top:282px;height:30px;line-height:30px;overflow:visible">18990408565</div>
<div class="c" style="left:635px;top:282px;height:30px;line-height:30px"><span class="z">系统部</span></div>
<div class="c" style="left:731px;top:282px;width:88px;height:30px;line-height:30px;text-align:right">0.00</div>
<div class="c" style="left:833px;top:282px;width:186px;height:30px;line-height:30px;text-align:right">33,525.00</div>
<div class="c" style="left:1033px;top:282px;width:96px;height:30px;line-height:30px;text-align:right">100</div>
<div class="c" style="left:1143px;top:282px;width:96px;height:30px;line-height:30px;text-align:right">5</div>
<div class="c" style="left:1253px;top:282px;width:96px;height:30px;line-height:30px;text-align:right">28,375.00</div>
<div class="c" style="left:1363px;top:282px;width:96px;height:30px;line-height:30px;text-align:right">0.00</div>
<div class="c" style="left:1473px;top:282px;width:96px;height:30px;line-height:30px;text-align:right">0</div>
<div class="c" style="left:1583px;top:282px;width:96px;height:30px;line-height:30px;text-align:right">11</div>
<div class="c" style="left:1693px;top:282px;width:96px;height:30px;line-height:30px;text-align:right">10</div>
<div class="c" style="left:1804px;top:282px;width:74px;height:30px;line-height:30px"><div style="position:absolute;left:59px"></div></div>
<div class="c" style="left:239px;top:313px;height:30px;line-height:30px">2</div>
<div class="c lnk" style="left:274px;top:313px;width:146px;height:30px;line-height:30px;text-align:center;overflow:visible"><span class="z">每期对比</span></div>
<div class="c" style="left:427px;top:313px;height:30px;line-height:30px">00002</div>
<div class="c lnk" style="left:511px;top:313px;height:30px;line-height:30px;overflow:visible">zq<span class="z">拣货</span></div>
<div class="c" style="left:635px;top:313px;height:30px;line-height:30px"><span class="z">系统部</span></div>
<div class="c" style="left:731px;top:313px;width:88px;height:30px;line-height:30px;text-align:right">0.00</div>
<div class="c" style="left:833px;top:313px;width:186px;height:30px;line-height:30px;text-align:right">12,500.00</div>
<div class="c" style="left:1033px;top:313px;width:96px;height:30px;line-height:30px;text-align:right">100</div>
<div class="c" style="left:1143px;top:313px;width:96px;height:30px;line-height:30px;text-align:right">1</div>
<div class="c" style="left:1253px;top:313px;width:96px;height:30px;line-height:30px;text-align:right">12,000.00</div>
<div class="c" style="left:1363px;top:313px;width:96px;height:30px;line-height:30px;text-align:right">0.00</div>
<div class="c" style="left:1473px;top:313px;width:96px;height:30px;line-height:30px;text-align:right">0</div>
<div class="c" style="left:1583px;top:313px;width:96px;height:30px;line-height:30px;text-align:right">1</div>
<div class="c" style="left:1693px;top:313px;width:96px;height:30px;line-height:30px;text-align:right">1</div>
<div class="c" style="left:1804px;top:313px;width:74px;height:30px;line-height:30px"><div style="position:absolute;left:59px"></div></div>
<div class="c" style="left:239px;top:344px;height:30px;line-height:30px">3</div>
<div class="c lnk" style="left:274px;top:344px;width:146px;height:30px;line-height:30px;text-align:center;overflow:visible"><span class="z">每期对比</span></div>
<div class="c" style="left:427px;top:344px;height:30px;line-height:30px">00003</div>
<div class="c lnk" style="left:511px;top:344px;height:30px;line-height:30px;overflow:visible"><span class="z">张凡</span></div>
<div class="c" style="left:635px;top:344px;height:30px;line-height:30px"><span class="z">财务部</span></div>
<div class="c" style="left:731px;top:344px;width:88px;height:30px;line-height:30px;text-align:right">0.00</div>
<div class="c" style="left:833px;top:344px;width:186px;height:30px;line-height:30px;text-align:right">5,772.76</div>
<div class="c" style="left:1033px;top:344px;width:96px;height:30px;line-height:30px;text-align:right">100</div>
<div class="c" style="left:1143px;top:344px;width:96px;height:30px;line-height:30px;text-align:right">1</div>
<div class="c" style="left:1253px;top:344px;width:96px;height:30px;line-height:30px;text-align:right">3,312.76</div>
<div class="c" style="left:1363px;top:344px;width:96px;height:30px;line-height:30px;text-align:right">-110.00</div>
<div class="c" style="left:1473px;top:344px;width:96px;height:30px;line-height:30px;text-align:right">-1.91</div>
<div class="c" style="left:1583px;top:344px;width:96px;height:30px;line-height:30px;text-align:right">15</div>
<div class="c" style="left:1693px;top:344px;width:96px;height:30px;line-height:30px;text-align:right">9</div>
<div class="c" style="left:1804px;top:344px;width:74px;height:30px;line-height:30px"><div style="position:absolute;left:59px">1.67</div></div>
<div class="c" style="left:239px;top:375px;height:30px;line-height:30px">4</div>
<div class="c lnk" style="left:274px;top:375px;width:146px;height:30px;line-height:30px;text-align:center;overflow:visible"><span class="z">每期对比</span></div>
<div class="c" style="left:427px;top:375px;height:30px;line-height:30px">00004</div>
<div class="c lnk" style="left:511px;top:375px;height:30px;line-height:30px;overflow:visible">zq<span class="z">张三</span></div>
<div class="c" style="left:635px;top:375px;height:30px;line-height:30px"><span class="z">系统部</span></div>
<div class="c" style="left:731px;top:375px;width:88px;height:30px;line-height:30px;text-align:right">0.00</div>
<div class="c" style="left:833px;top:375px;width:186px;height:30px;line-height:30px;text-align:right">1,491.85</div>
<div class="c" style="left:1033px;top:375px;width:96px;height:30px;line-height:30px;text-align:right">100</div>
<div class="c" style="left:1143px;top:375px;width:96px;height:30px;line-height:30px;text-align:right">1</div>
<div class="c" style="left:1253px;top:375px;width:96px;height:30px;line-height:30px;text-align:right">631.85</div>
<div class="c" style="left:1363px;top:375px;width:96px;height:30px;line-height:30px;text-align:right">-10.00</div>
<div class="c" style="left:1473px;top:375px;width:96px;height:30px;line-height:30px;text-align:right">-0.67</div>
<div class="c" style="left:1583px;top:375px;width:96px;height:30px;line-height:30px;text-align:right">7</div>
<div class="c" style="left:1693px;top:375px;width:96px;height:30px;line-height:30px;text-align:right">6</div>
<div class="c" style="left:1804px;top:375px;width:74px;height:30px;line-height:30px"><div style="position:absolute;left:59px">1.17</div></div>
<div class="c" style="left:239px;top:406px;height:30px;line-height:30px">5</div>
<div class="c lnk" style="left:274px;top:406px;width:146px;height:30px;line-height:30px;text-align:center;overflow:visible"><span class="z">每期对比</span></div>
<div class="c" style="left:427px;top:406px;height:30px;line-height:30px">00005</div>
<div class="c lnk" style="left:511px;top:406px;height:30px;line-height:30px;overflow:visible">zq<span class="z">司机</span></div>
<div class="c" style="left:635px;top:406px;height:30px;line-height:30px"><span class="z">系统部</span></div>
<div class="c" style="left:731px;top:406px;width:88px;height:30px;line-height:30px;text-align:right">0.00</div>
<div class="c" style="left:833px;top:406px;width:186px;height:30px;line-height:30px;text-align:right">0.00</div>
<div class="c" style="left:1033px;top:406px;width:96px;height:30px;line-height:30px;text-align:right">0</div>
<div class="c" style="left:1143px;top:406px;width:96px;height:30px;line-height:30px;text-align:right">0</div>
<div class="c" style="left:1253px;top:406px;width:96px;height:30px;line-height:30px;text-align:right">0.00</div>
<div class="c" style="left:1363px;top:406px;width:96px;height:30px;line-height:30px;text-align:right">0.00</div>
<div class="c" style="left:1473px;top:406px;width:96px;height:30px;line-height:30px;text-align:right">0</div>
<div class="c" style="left:1583px;top:406px;width:96px;height:30px;line-height:30px;text-align:right">0</div>
<div class="c" style="left:1693px;top:406px;width:96px;height:30px;line-height:30px;text-align:right">0</div>
<div class="c" style="left:1804px;top:406px;width:74px;height:30px;line-height:30px"><div style="position:absolute;left:59px"></div></div>
<div class="c" style="left:239px;top:437px;height:30px;line-height:30px">6</div>
<div class="c lnk" style="left:274px;top:437px;width:146px;height:30px;line-height:30px;text-align:center;overflow:visible"><span class="z">每期对比</span></div>
<div class="c" style="left:427px;top:437px;height:30px;line-height:30px">00006</div>
<div class="c lnk" style="left:511px;top:437px;height:30px;line-height:30px;overflow:visible"><span class="z">销售员</span>2</div>
<div class="c" style="left:635px;top:437px;height:30px;line-height:30px"><span class="z">销售部</span>2</div>
<div class="c" style="left:731px;top:437px;width:88px;height:30px;line-height:30px;text-align:right">0.00</div>
<div class="c" style="left:833px;top:437px;width:186px;height:30px;line-height:30px;text-align:right">0.00</div>
<div class="c" style="left:1033px;top:437px;width:96px;height:30px;line-height:30px;text-align:right">0</div>
<div class="c" style="left:1143px;top:437px;width:96px;height:30px;line-height:30px;text-align:right">0</div>
<div class="c" style="left:1253px;top:437px;width:96px;height:30px;line-height:30px;text-align:right">0.00</div>
<div class="c" style="left:1363px;top:437px;width:96px;height:30px;line-height:30px;text-align:right">0.00</div>
<div class="c" style="left:1473px;top:437px;width:96px;height:30px;line-height:30px;text-align:right">0</div>
<div class="c" style="left:1583px;top:437px;width:96px;height:30px;line-height:30px;text-align:right">0</div>
<div class="c" style="left:1693px;top:437px;width:96px;height:30px;line-height:30px;text-align:right">0</div>
<div class="c" style="left:1804px;top:437px;width:74px;height:30px;line-height:30px"><div style="position:absolute;left:59px"></div></div>
<div class="c" style="left:239px;top:468px;height:30px;line-height:30px">7</div>
<div class="c lnk" style="left:274px;top:468px;width:146px;height:30px;line-height:30px;text-align:center;overflow:visible"><span class="z">每期对比</span></div>
<div class="c" style="left:427px;top:468px;height:30px;line-height:30px">00007</div>
<div class="c lnk" style="left:511px;top:468px;height:30px;line-height:30px;overflow:visible"><span class="z">采购员</span></div>
<div class="c" style="left:635px;top:468px;height:30px;line-height:30px"><span class="z">采购部</span>1</div>
<div class="c" style="left:731px;top:468px;width:88px;height:30px;line-height:30px;text-align:right">0.00</div>
<div class="c" style="left:833px;top:468px;width:186px;height:30px;line-height:30px;text-align:right">0.00</div>
<div class="c" style="left:1033px;top:468px;width:96px;height:30px;line-height:30px;text-align:right">0</div>
<div class="c" style="left:1143px;top:468px;width:96px;height:30px;line-height:30px;text-align:right">0</div>
<div class="c" style="left:1253px;top:468px;width:96px;height:30px;line-height:30px;text-align:right">0.00</div>
<div class="c" style="left:1363px;top:468px;width:96px;height:30px;line-height:30px;text-align:right">0.00</div>
<div class="c" style="left:1473px;top:468px;width:96px;height:30px;line-height:30px;text-align:right">0</div>
<div class="c" style="left:1583px;top:468px;width:96px;height:30px;line-height:30px;text-align:right">0</div>
<div class="c" style="left:1693px;top:468px;width:96px;height:30px;line-height:30px;text-align:right">0</div>
<div class="c" style="left:1804px;top:468px;width:74px;height:30px;line-height:30px"><div style="position:absolute;left:59px"></div></div>
<div class="c" style="left:239px;top:499px;height:30px;line-height:30px">8</div>
<div class="c lnk" style="left:274px;top:499px;width:146px;height:30px;line-height:30px;text-align:center;overflow:visible"><span class="z">每期对比</span></div>
<div class="c" style="left:427px;top:499px;height:30px;line-height:30px">00008</div>
<div class="c lnk" style="left:511px;top:499px;height:30px;line-height:30px;overflow:visible"><span class="z">销售员</span>1</div>
<div class="c" style="left:635px;top:499px;height:30px;line-height:30px"><span class="z">销售部</span>1</div>
<div class="c" style="left:731px;top:499px;width:88px;height:30px;line-height:30px;text-align:right">0.00</div>
<div class="c" style="left:833px;top:499px;width:186px;height:30px;line-height:30px;text-align:right">0.00</div>
<div class="c" style="left:1033px;top:499px;width:96px;height:30px;line-height:30px;text-align:right">0</div>
<div class="c" style="left:1143px;top:499px;width:96px;height:30px;line-height:30px;text-align:right">0</div>
<div class="c" style="left:1253px;top:499px;width:96px;height:30px;line-height:30px;text-align:right">0.00</div>
<div class="c" style="left:1363px;top:499px;width:96px;height:30px;line-height:30px;text-align:right">0.00</div>
<div class="c" style="left:1473px;top:499px;width:96px;height:30px;line-height:30px;text-align:right">0</div>
<div class="c" style="left:1583px;top:499px;width:96px;height:30px;line-height:30px;text-align:right">0</div>
<div class="c" style="left:1693px;top:499px;width:96px;height:30px;line-height:30px;text-align:right">0</div>
<div class="c" style="left:1804px;top:499px;width:74px;height:30px;line-height:30px"><div style="position:absolute;left:59px"></div></div>
<div class="c" style="left:239px;top:530px;height:30px;line-height:30px">9</div>
<div class="c lnk" style="left:274px;top:530px;width:146px;height:30px;line-height:30px;text-align:center;overflow:visible"><span class="z">每期对比</span></div>
<div class="c" style="left:427px;top:530px;height:30px;line-height:30px">00009</div>
<div class="c lnk" style="left:511px;top:530px;height:30px;line-height:30px;overflow:visible">cscc3</div>
<div class="c" style="left:635px;top:530px;height:30px;line-height:30px"><span class="z">销售部</span>2</div>
<div class="c" style="left:731px;top:530px;width:88px;height:30px;line-height:30px;text-align:right">0.00</div>
<div class="c" style="left:833px;top:530px;width:186px;height:30px;line-height:30px;text-align:right">0.00</div>
<div class="c" style="left:1033px;top:530px;width:96px;height:30px;line-height:30px;text-align:right">0</div>
<div class="c" style="left:1143px;top:530px;width:96px;height:30px;line-height:30px;text-align:right">0</div>
<div class="c" style="left:1253px;top:530px;width:96px;height:30px;line-height:30px;text-align:right">0.00</div>
<div class="c" style="left:1363px;top:530px;width:96px;height:30px;line-height:30px;text-align:right">0.00</div>
<div class="c" style="left:1473px;top:530px;width:96px;height:30px;line-height:30px;text-align:right">0</div>
<div class="c" style="left:1583px;top:530px;width:96px;height:30px;line-height:30px;text-align:right">0</div>
<div class="c" style="left:1693px;top:530px;width:96px;height:30px;line-height:30px;text-align:right">0</div>
<div class="c" style="left:1804px;top:530px;width:74px;height:30px;line-height:30px"><div style="position:absolute;left:59px"></div></div>
<div class="c" style="left:239px;top:561px;height:30px;line-height:30px">10</div>
<div class="c lnk" style="left:274px;top:561px;width:146px;height:30px;line-height:30px;text-align:center;overflow:visible"><span class="z">每期对比</span></div>
<div class="c" style="left:427px;top:561px;height:30px;line-height:30px">00010</div>
<div class="c lnk" style="left:511px;top:561px;height:30px;line-height:30px;overflow:visible"><span class="z">罗燕辉</span></div>
<div class="c" style="left:635px;top:561px;height:30px;line-height:30px"><span class="z">系统部</span></div>
<div class="c" style="left:731px;top:561px;width:88px;height:30px;line-height:30px;text-align:right">0.00</div>
<div class="c" style="left:833px;top:561px;width:186px;height:30px;line-height:30px;text-align:right">0.00</div>
<div class="c" style="left:1033px;top:561px;width:96px;height:30px;line-height:30px;text-align:right">0</div>
<div class="c" style="left:1143px;top:561px;width:96px;height:30px;line-height:30px;text-align:right">0</div>
<div class="c" style="left:1253px;top:561px;width:96px;height:30px;line-height:30px;text-align:right">0.00</div>
<div class="c" style="left:1363px;top:561px;width:96px;height:30px;line-height:30px;text-align:right">0.00</div>
<div class="c" style="left:1473px;top:561px;width:96px;height:30px;line-height:30px;text-align:right">0</div>
<div class="c" style="left:1583px;top:561px;width:96px;height:30px;line-height:30px;text-align:right">0</div>
<div class="c" style="left:1693px;top:561px;width:96px;height:30px;line-height:30px;text-align:right">0</div>
<div class="c" style="left:1804px;top:561px;width:74px;height:30px;line-height:30px"><div style="position:absolute;left:59px"></div></div>
<div class="c" style="left:239px;top:592px;height:30px;line-height:30px">11</div>
<div class="c" style="left:239px;top:623px;height:30px;line-height:30px">12</div>
<div class="c" style="left:239px;top:654px;height:30px;line-height:30px">13</div>
<div class="c" style="left:239px;top:685px;height:30px;line-height:30px">14</div>
<div class="c" style="left:239px;top:716px;height:30px;line-height:30px">15</div>
<div class="c" style="left:239px;top:747px;height:30px;line-height:30px">16</div>
<div class="c" style="left:239px;top:778px;height:30px;line-height:30px">17</div>
<div class="c" style="left:239px;top:809px;height:30px;line-height:30px">18</div>
<div class="c" style="left:239px;top:840px;height:12px;line-height:30px">19</div>
<div class="c" style="left:731px;top:871px;width:88px;height:31px;line-height:31px;text-align:right;font-weight:bold;color:#f27a63">0.00</div>
<div class="c" style="left:833px;top:871px;width:186px;height:31px;line-height:31px;text-align:right;font-weight:bold;color:#f27a63">53,289.61</div>
<div class="c" style="left:1253px;top:871px;width:96px;height:31px;line-height:31px;text-align:right;font-weight:bold;color:#f27a63">44,319.61</div>
<div class="c" style="left:1363px;top:871px;width:96px;height:31px;line-height:31px;text-align:right;font-weight:bold;color:#f27a63">-120.00</div>
<div class="c" style="left:1583px;top:871px;width:96px;height:31px;line-height:31px;text-align:right;font-weight:bold;color:#f27a63">34</div>
<div class="abs" style="left:725px;top:910px;width:45px;height:20px;border:1px solid #d9dce3;background:#fff;line-height:18px;text-align:center;color:#888;white-space:nowrap"><span class="z">首页</span></div>
<div class="abs" style="left:775px;top:910px;width:56px;height:20px;border:1px solid #d9dce3;background:#fff;line-height:18px;text-align:center;color:#888;white-space:nowrap"><span style="display:inline-block;width:0;height:0;border-top:4px solid transparent;border-bottom:4px solid transparent;border-right:4px solid #777;margin-right:5px;vertical-align:-1px"></span><span class="z">上页</span></div>
<div class="abs" style="left:843px;top:912px;line-height:14px;white-space:nowrap"><span class="z">第</span> <span style="color:#7b9bd3">(1/1)</span> <span class="z">页</span></div>
<div class="abs" style="left:910px;top:910px;width:56px;height:20px;border:1px solid #d9dce3;background:#fff;line-height:18px;text-align:center;color:#888;white-space:nowrap"><span class="z">下页</span><span style="display:inline-block;width:0;height:0;border-top:4px solid transparent;border-bottom:4px solid transparent;border-left:4px solid #777;margin-left:5px;vertical-align:-1px"></span></div>
<div class="abs" style="left:971px;top:910px;width:45px;height:20px;border:1px solid #d9dce3;background:#fff;line-height:18px;text-align:center;color:#888;white-space:nowrap"><span class="z">尾页</span></div>
<div class="abs" style="left:1058px;top:912px;line-height:14px"><span class="z">跳转到</span></div>
<div class="abs" style="left:1098px;top:911px;width:23px;height:17px;border:1px solid #555;border-radius:2px;background:#fff;line-height:15px;padding-left:2px">1</div>
<div class="abs" style="left:1125px;top:912px;line-height:14px"><span class="z">页</span></div>
<div class="abs" style="left:1143px;top:911px;width:36px;height:18px;border-radius:4px;background:#5a6f8a;color:#fff;line-height:18px;text-align:center"><span class="z">跳转</span></div>
<div class="abs" style="left:1227px;top:912px;line-height:14px;white-space:nowrap"><span class="z">共</span> <span style="color:#7b9bd3">10</span> <span class="z">条记录</span></div>
<div class="abs" style="left:1307px;top:912px;line-height:14px"><span class="z">每页显示</span></div>
<div class="abs" style="left:1358px;top:910px;width:28px;height:19px;border:1px solid #555;border-radius:2px;background:#fff;line-height:17px;padding-left:3px;color:#7b9bd3">20</div>
<div class="abs" style="left:1389px;top:912px;line-height:14px"><span class="z">行</span></div>
<div class="red" style="left:-1px;top:62px;width:1918px;height:562px"></div>
<div class="red" style="left:691px;top:92px;width:242px;height:71px"></div>
<div class="red" style="left:871px;top:239px;width:306px;height:48px"></div>
</body></html>
